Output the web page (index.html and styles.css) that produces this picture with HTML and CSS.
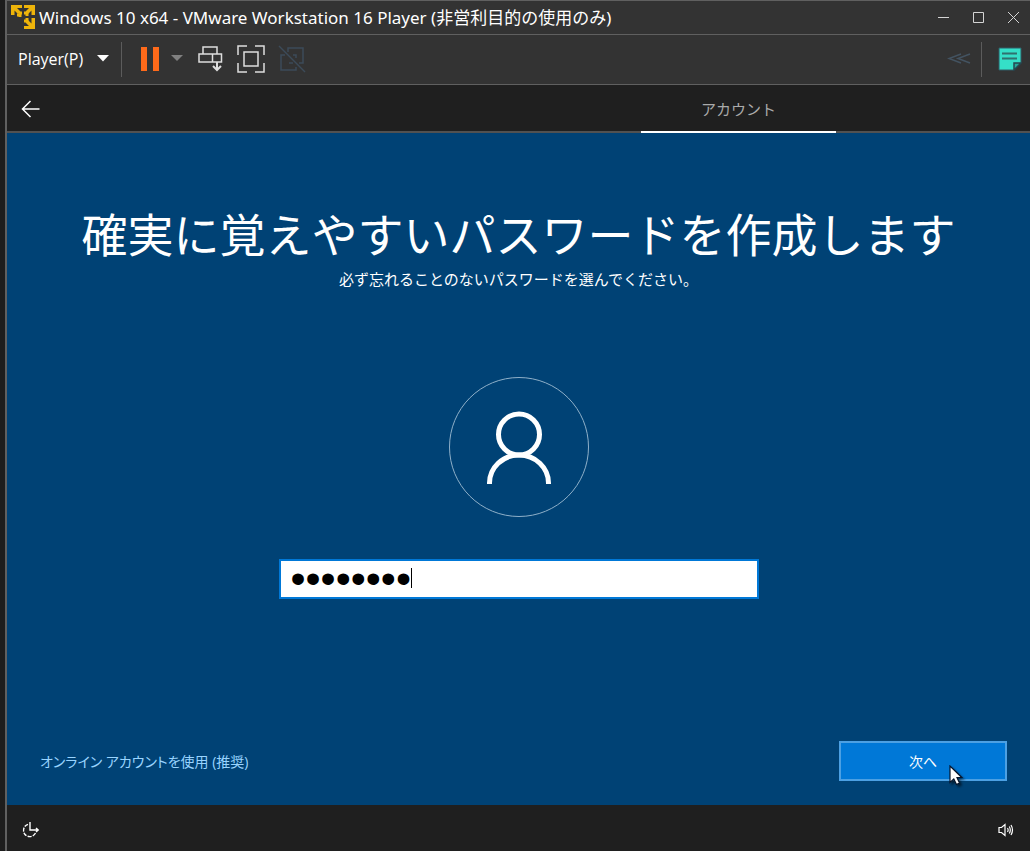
FILE: index.html
```html
<!DOCTYPE html>
<html lang="ja">
<head>
<meta charset="utf-8">
<title>Windows 10 x64 - VMware Workstation 16 Player</title>
<link rel="stylesheet" href="styles.css">
</head>
<body>
<div class="window">
  <header class="titlebar">
    <svg class="app-icon" width="24" height="24" viewBox="0 0 24 24" aria-hidden="true">
      <path d="M0 0H11V3H6L9.500 6.500L7 9L3.500 5.500V10H0ZM13 0H24V10H20.500V5.500L17 9L14.500 6.500L18 3H13ZM24 13V24H13V21H18L14.500 17.500L17 15L20.500 18.500V13Z" fill="#eeb40a"/>
      <path d="M6 10H9V8H11M13 8H16V11M16 13V16H13M9 10V12" fill="none" stroke="#eeb40a" stroke-width="3"/>
    </svg>
    <h1 class="window-title">Windows 10 x64 - VMware Workstation 16 Player (非営利目的の使用のみ)</h1>
    <div class="window-controls">
      <button class="icon-button" type="button" aria-label="最小化">
        <svg width="35" height="33" viewBox="0 0 35 33"><path d="M13 16.500H24" stroke="#d4d4d4" fill="none"/></svg>
      </button>
      <button class="icon-button" type="button" aria-label="最大化">
        <svg width="35" height="33" viewBox="0 0 35 33"><path d="M13.500 11.500H23.500V21.500H13.500Z" stroke="#d4d4d4" fill="none"/></svg>
      </button>
      <button class="icon-button" type="button" aria-label="閉じる">
        <svg width="35" height="33" viewBox="0 0 35 33"><path d="M13 11L24 22M24 11L13 22" stroke="#d4d4d4" fill="none"/></svg>
      </button>
    </div>
  </header>

  <div class="toolbar">
    <button class="menu-button" type="button">Player(P)
      <svg width="12" height="8" viewBox="0 0 12 8" aria-hidden="true"><path d="M0 0H12L6 6.500Z" fill="#fff"/></svg>
    </button>
    <span class="divider"></span>
    <div class="tools">
      <button class="icon-button" type="button" aria-label="一時停止">
        <svg width="18" height="24" viewBox="0 0 18 24"><path d="M0 0H6V24H0ZM12 0H18V24H12Z" fill="#ff6a1a"/></svg>
      </button>
      <button class="icon-button power-menu" type="button" aria-label="電源メニュー">
        <svg width="12" height="8" viewBox="0 0 12 8"><path d="M0 0H12L6 6Z" fill="#808080"/></svg>
      </button>
      <button class="icon-button send-keys" type="button" aria-label="Ctrl+Alt+Del を送信">
        <svg width="26" height="28" viewBox="0 0 26 28"><g fill="none" stroke="#dedede" stroke-width="1.500"><path d="M5 9V2H19V9M1 9H23.500V17H1ZM14.500 9V17"/><path d="M19 17V25M15 21L19 25L23 21" stroke-width="2"/></g></svg>
      </button>
      <button class="icon-button" type="button" aria-label="全画面表示">
        <svg width="28" height="28" viewBox="0 0 28 28"><g fill="none" stroke="#dedede" stroke-width="1.500"><path d="M1 10V1H10M18 1H27V10M27 18V27H18M10 27H1V18"/><path d="M7 7H21V21H7Z"/></g></svg>
      </button>
      <button class="icon-button unity" type="button" aria-label="ユニティ" disabled>
        <svg width="28" height="28" viewBox="0 0 28 28"><g fill="none" stroke="#3c4b59" stroke-width="1.500"><path d="M10 7V3H25V18H21M7 10H3V25H18V22M15 10H18V13M15 18H11"/><path d="M1 1L27 27"/></g></svg>
      </button>
    </div>
    <div class="tools tools-end">
      <button class="icon-button" type="button" aria-label="ツールバーを隠す" disabled>
        <svg width="24" height="12" viewBox="0 0 24 12"><path d="M14 1L2 5.500L14 10M23 1L11 5.500L23 10" fill="none" stroke="#435361" stroke-width="1.500"/></svg>
      </button>
      <span class="divider"></span>
      <button class="icon-button note" type="button" aria-label="ヒント">
        <svg width="24" height="24" viewBox="0 0 24 24"><path d="M1 1H23V16L16 23H1Z" fill="#35dfc8" stroke="#315d66"/><path d="M16 23V16H23Z" fill="#26a79b" stroke="#26464f" stroke-width="1.500"/><path d="M4 6.500H19M4 11.500H19" stroke="#30716f" stroke-width="2"/></svg>
      </button>
    </div>
  </div>

  <nav class="setup-nav">
    <button class="icon-button back" type="button" aria-label="戻る">
      <svg width="20" height="18" viewBox="0 0 20 18"><path d="M18.500 9H1.500M9.500 1L1.500 9L9.500 17" fill="none" stroke="#fff" stroke-width="1.500"/></svg>
    </button>
    <span class="tab">アカウント</span>
  </nav>

  <main class="setup">
    <h2 class="heading">確実に覚えやすいパスワードを作成します</h2>
    <p class="lead">必ず忘れることのないパスワードを選んでください。</p>
    <svg class="avatar" width="140" height="140" viewBox="0 0 140 140" aria-hidden="true">
      <circle cx="70" cy="70" r="69.500" fill="none" stroke="#8fb0c9"/>
      <g fill="none" stroke="#fff" stroke-width="5"><circle cx="70" cy="57.500" r="20.500"/><path d="M40.500 107V106A29.500 28 0 0 1 99.500 106V107"/></g>
    </svg>
    <div class="password">
      <input class="password-input" type="password" value="password" aria-label="パスワード">
      <span class="caret"></span>
    </div>
    <div class="actions">
      <a class="online-link" href="#">オンライン アカウントを使用 (推奨)</a>
      <div class="next">
        <button class="next-button" type="button">次へ</button>
        <svg class="pointer" width="18" height="24" viewBox="0 0 18 24" aria-hidden="true"><path d="M1 1V17.500L4.800 14L7.500 19.500L10.500 18L8 12.500H12.800Z" fill="#fff" stroke="#06142a" stroke-width="1.200"/></svg>
      </div>
    </div>
  </main>

  <footer class="statusbar">
    <button class="icon-button" type="button" aria-label="コンピューターの簡単操作">
      <svg width="18" height="16" viewBox="0 0 18 16"><g fill="none" stroke="#fff" stroke-width="1.400"><path d="M8 0V8H16M14 6L16.200 8L14 10"/><path d="M6 2.300A6.300 6.300 0 1 0 13.500 11" stroke-dasharray="4 1.200"/></g></svg>
    </button>
    <button class="icon-button" type="button" aria-label="音量">
      <svg width="16" height="14" viewBox="0 0 16 14"><g fill="none" stroke="#fff" stroke-width="1.200"><path d="M1 4.500H3.500L7 1.500V12.500L3.500 9.500H1Z"/><path d="M9.500 5Q10.800 7 9.500 9M11.300 3.500Q13.300 7 11.300 10.500M13 2Q16 7 13 12"/></g></svg>
    </button>
  </footer>
</div>
</body>
</html>
```
FILE: styles.css
```css
* {
  box-sizing: border-box;
}

body {
  margin: 0;
  padding-left: 5px;
  background: #1d1d1d;
  color: #fff;
  font-family: "Open Sans", "Noto Sans CJK JP", sans-serif;
}

button {
  padding: 0;
  border: 0;
  background: none;
  color: inherit;
  font: inherit;
}

svg {
  display: block;
  flex: none;
}

.window {
  display: flex;
  flex-direction: column;
  min-height: 100vh;
  border-top: 1px solid #606060;
  border-left: 2px solid #606060;
  background: #1f1f1f;
}

.titlebar {
  display: flex;
  align-items: center;
  height: 34px;
  padding-left: 4px;
  border-bottom: 1px solid #606060;
  background: #333;
}

.app-icon {
  margin-bottom: 1px;
}

.window-title {
  flex: 1;
  margin: 0 0 0 4px;
  font: 400 17px "Noto Sans", "Noto Sans CJK JP", sans-serif;
  line-height: 33px;
  white-space: nowrap;
}

.window-controls {
  display: flex;
}

.toolbar {
  display: flex;
  align-items: center;
  height: 50px;
  padding-left: 11px;
  border-bottom: 1px solid #606060;
  background: #333;
}

.menu-button {
  display: flex;
  align-items: center;
  gap: 14px;
  font-size: 16px;
  line-height: 20px;
  padding-bottom: 2px;
}

.divider {
  width: 1px;
  height: 35px;
  margin-left: 12px;
  background: #5c5c5c;
}

.tools {
  display: flex;
  align-items: center;
  margin-left: 19px;
  padding-bottom: 1px;
}

.power-menu {
  margin: 0 15px 0 12px;
}

.send-keys {
  margin-right: 13px;
}

.unity {
  margin-left: 13px;
}

.tools-end {
  margin-left: auto;
  padding-right: 8px;
}

.tools-end .divider {
  margin-left: 10px;
}

.note {
  margin-left: 16px;
}

.setup-nav {
  display: flex;
  align-items: stretch;
  justify-content: space-between;
  height: 48px;
  padding: 0 194px 0 14px;
  border-bottom: 2px solid #515151;
}

.back {
  padding-top: 2px;
}

.tab {
  width: 195px;
  margin-bottom: -2px;
  border-bottom: 2px solid #fff;
  color: #aaa;
  font-size: 15px;
  line-height: 48px;
  text-align: center;
}

.setup {
  display: flex;
  flex: 1;
  flex-direction: column;
  align-items: center;
  padding-top: 67px;
  background: #004275;
}

.heading {
  margin: 0;
  font-size: 46px;
  font-weight: 400;
  line-height: 68px;
  white-space: nowrap;
}

.lead {
  margin: 0;
  font-size: 15px;
  line-height: 22px;
}

.avatar {
  margin-top: 87px;
}

.password {
  position: relative;
  width: 480px;
  max-width: 100%;
  margin-top: 42px;
}

.password-input {
  display: block;
  width: 100%;
  height: 40px;
  padding: 0 10px 2px;
  border: 2px solid #0078d7;
  border-radius: 0;
  outline: 0;
  background: #fff;
  color: #000;
  font: 43px "Liberation Sans", sans-serif;
}

.caret {
  position: absolute;
  top: 9px;
  left: 132px;
  width: 1px;
  height: 20px;
  background: #000;
}

.actions {
  display: flex;
  align-items: center;
  align-self: stretch;
  justify-content: space-between;
  margin-top: auto;
  padding: 0 23px 24px 33px;
}

.online-link {
  color: #99d4ff;
  font-size: 14px;
  font-feature-settings: "palt";
  text-decoration: none;
}

.next {
  position: relative;
}

.next-button {
  width: 168px;
  height: 40px;
  border: 2px solid #4ca0e3;
  background: #0078d7;
  font-size: 14px;
}

.pointer {
  position: absolute;
  top: 24px;
  left: 110px;
  filter: drop-shadow(2px 2px 1px #0008);
}

.statusbar {
  display: flex;
  align-items: center;
  justify-content: space-between;
  height: 46px;
  padding: 4px 16px 0 15px;
}
```
